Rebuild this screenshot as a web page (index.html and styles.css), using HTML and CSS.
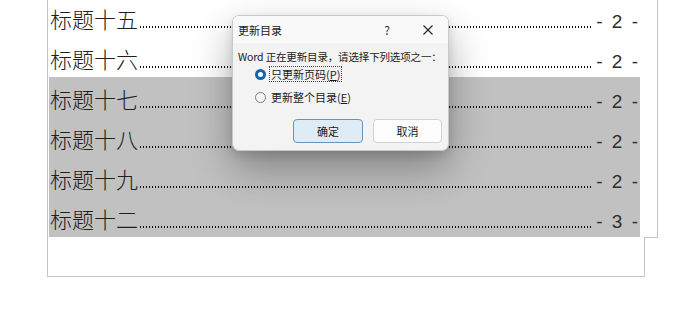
FILE: index.html
```html
<!DOCTYPE html>
<html lang="zh-CN">
<head>
<meta charset="utf-8">
<title>更新目录</title>
<link rel="stylesheet" href="styles.css">
</head>
<body>
<div class="doc">
  <div class="toc">
    <div class="row"><span class="t">标题十五</span><span class="lead"></span><span class="n">- 2 -</span></div>
    <div class="row"><span class="t">标题十六</span><span class="lead"></span><span class="n">- 2 -</span></div>
    <div class="row sel"><span class="t">标题十七</span><span class="lead"></span><span class="n">- 2 -</span></div>
    <div class="row sel"><span class="t">标题十八</span><span class="lead"></span><span class="n">- 2 -</span></div>
    <div class="row sel"><span class="t">标题十九</span><span class="lead"></span><span class="n">- 2 -</span></div>
    <div class="row sel"><span class="t">标题十二</span><span class="lead"></span><span class="n">- 3 -</span></div>
  </div>
  <div class="tail"><div class="blank"></div><div class="corner"></div></div>
</div>

<div class="dialog">
  <div class="titlebar">
    <span class="title">更新目录</span>
    <span class="help">?</span>
    <span class="close"><svg width="10" height="10" viewBox="0 0 10 10"><path d="M0.5 0.5L9.5 9.5M9.5 0.5L0.5 9.5" stroke="#222" stroke-width="1.1" fill="none"/></svg></span>
  </div>
  <div class="body">
    <div class="msg">Word 正在更新目录，请选择下列选项之一：</div>
    <div class="opt"><span class="radio on"></span><span class="lbl focus">只更新页码(<u>P</u>)</span></div>
    <div class="opt opt2"><span class="radio"></span><span class="lbl">更新整个目录(<u>E</u>)</span></div>
    <div class="btns">
      <span class="btn primary">确定</span>
      <span class="btn">取消</span>
    </div>
  </div>
</div>
</body>
</html>
```
FILE: styles.css
```css
html, body {
  margin: 0;
  padding: 0;
  background: #ffffff;
}
body {
  width: 683px;
  height: 325px;
  overflow: hidden;
  position: relative;
  font-family: "Noto Sans CJK SC", "Noto Sans", sans-serif;
}
.doc {
  margin-left: 47px;
  width: 611px;
}
.toc {
  margin-top: -3px;
  border-left: 1px solid #c4c4c4;
  border-right: 1px solid #c4c4c4;
  padding-left: 1px;
}
.row {
  width: 591px;
  height: 40px;
  display: flex;
  align-items: baseline;
  line-height: 40px;
  box-sizing: border-box;
  padding-left: 1px;
  padding-right: 2px;
  padding-top: 1px;
}
.row.sel {
  background: #c1c1c1;
}
.t {
  font-family: "Noto Sans CJK SC", sans-serif;
  font-weight: 300;
  font-size: 22px;
  color: #1e1e1e;
}
.lead {
  flex: 1;
  height: 2px;
  margin: 0 4px 2px 2px;
  background-image: linear-gradient(to right, #111111 0, #111111 1px, transparent 1px);
  background-size: 3px 2px;
  background-repeat: repeat-x;
}
.n {
  font-family: "Liberation Sans", Arial, sans-serif;
  font-size: 19px;
  color: #2e2e2e;
  word-spacing: 4px;
}
.tail {
  display: flex;
}
.blank {
  width: 598px;
  height: 40px;
  box-sizing: border-box;
  border-left: 1px solid #c4c4c4;
  border-right: 1px solid #c4c4c4;
  border-bottom: 1px solid #c4c4c4;
}
.corner {
  flex: 1;
  height: 0;
  border-top: 1px solid #c4c4c4;
}

.dialog {
  position: absolute;
  left: 232px;
  top: 15px;
  width: 217px;
  height: 136px;
  box-sizing: border-box;
  border: 1px solid #c9c9c9;
  border-radius: 7px;
  background: #f3f3f3;
  box-shadow: 0 18px 40px rgba(0, 0, 0, 0.32), 0 4px 10px rgba(0, 0, 0, 0.12);
  display: flex;
  flex-direction: column;
  overflow: hidden;
  font-size: 11px;
  color: #1b1b1b;
}
.titlebar {
  height: 27px;
  display: flex;
  align-items: center;
  background: #f9f9f9;
  padding-left: 5px;
}
.title {
  flex: 1;
  font-size: 11px;
}
.help {
  width: 20px;
  text-align: center;
  font-size: 12px;
  margin-right: 26px;
  color: #333;
}
.close {
  width: 10px;
  height: 10px;
  display: flex;
  margin-right: 15px;
}
.body {
  flex: 1;
  padding: 6px 0 0 5px;
  display: flex;
  flex-direction: column;
}
.msg {
  line-height: 16px;
  height: 16px;
  white-space: nowrap;
  font-size: 10.5px;
  letter-spacing: -0.15px;
}
.opt {
  display: flex;
  align-items: center;
  height: 16px;
  margin-top: 1px;
  padding-left: 17px;
}
.opt2 {
  margin-top: 7px;
}
.radio {
  width: 11px;
  height: 11px;
  box-sizing: border-box;
  border-radius: 50%;
  border: 1px solid #7a7a7a;
  background: #f6f6f6;
  margin-right: 3px;
}
.radio.on {
  border: 3px solid #1562b0;
  background: #ffffff;
}
.lbl {
  line-height: 14px;
  padding: 0 1px;
  border: 1px dotted transparent;
}
.lbl.focus {
  border-color: #444;
}
.btns {
  display: flex;
  justify-content: flex-end;
  gap: 10px;
  margin-top: 14px;
  padding-right: 6px;
}
.btn {
  width: 69px;
  height: 24px;
  box-sizing: border-box;
  border: 1px solid #d2d2d2;
  border-radius: 4px;
  background: #fdfdfd;
  display: flex;
  align-items: center;
  justify-content: center;
  font-size: 11px;
}
.btn.primary {
  width: 70px;
  background: #deecf8;
  border-color: #6a93bb;
}
```
